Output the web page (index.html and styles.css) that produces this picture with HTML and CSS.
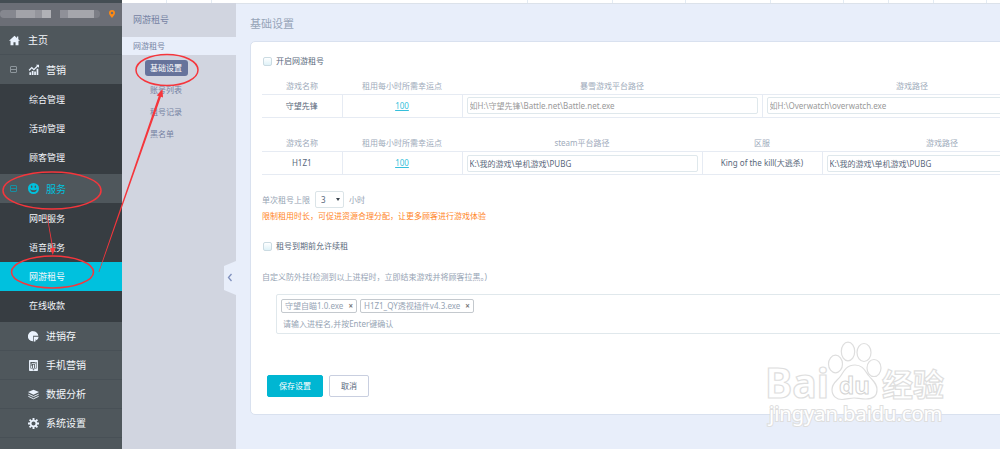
FILE: index.html
```html
<!DOCTYPE html>
<html lang="zh-CN">
<head>
<meta charset="utf-8">
<title>网游租号 - 基础设置</title>
<link rel="stylesheet" href="styles.css">
</head>
<body>
<div class="app">
  <nav class="sidebar">
    <div class="user">
      <span class="mask mask-a"></span><span class="mask mask-b"></span>
      <svg class="pin" viewBox="0 0 12 16"><path fill="#ff8a14" fill-rule="evenodd" d="M6 0a6 6 0 0 1 6 6c0 3.500-3.500 7-6 10-2.500-3-6-6.500-6-10a6 6 0 0 1 6-6zm0 3.500a2.500 2.500 0 1 0 0 5 2.500 2.500 0 0 0 0-5z"/></svg>
    </div>
    <a class="item home" href="#"><svg class="icon" viewBox="0 0 16 16"><path fill="#eaf2fd" d="M8 1 0 8.500h2.200V15H6.500v-4.500h3V15h4.300V8.500H16l-2.500-2.400V2h-2v2.200z"/></svg>主页</a>
    <a class="item" href="#"><span class="fold"></span><svg class="icon" viewBox="0 0 16 16"><path fill="#eaf2fd" d="M2 12h2.500v4H2zM5.500 10H8v6H5.500zM9 11h2.500v5H9zM12.500 7H15v9h-2.500zM1 8.500 5.500 4l3 3L13 2.500 11.500 1H16v4.500L14.200 4 8.500 9.500l-3-3L2 10z"/></svg>营销</a>
    <div class="sub">
      <a href="#">综合管理</a>
      <a href="#">活动管理</a>
      <a href="#">顾客管理</a>
    </div>
    <a class="item current" href="#"><span class="fold"></span><svg class="icon" viewBox="0 0 16 16"><circle cx="8" cy="8" r="8" fill="#00c1de"/><ellipse cx="5.300" cy="5.300" rx="1.100" ry="1.700" fill="#4b5358"/><ellipse cx="10.700" cy="5.300" rx="1.100" ry="1.700" fill="#4b5358"/><path d="M3 9c2.500 2 7.500 2 10 0-1 5.500-9 5.500-10 0z" fill="#4b5358"/></svg>服务</a>
    <div class="sub">
      <a href="#">网吧服务</a>
      <a href="#">语音服务</a>
      <a class="on" href="#">网游租号</a>
      <a href="#">在线收款</a>
    </div>
    <a class="item line" href="#"><svg class="icon" viewBox="0 0 16 16"><path fill="#eaf2fd" d="M7.200.5A7.200 7.200 0 0 1 15 7H7v8A7.200 7.200 0 0 1 7.200.500z"/><path fill="#eaf2fd" d="M7.500.5a7.300 7.300 0 0 0 0 14.500zM8.500 8.500h7a7 7 0 0 1-3 5l-1.500-1.500v3l-2.500.8z"/></svg>进销存</a>
    <a class="item line" href="#"><svg class="icon" viewBox="0 0 16 16"><path fill="#eaf2fd" fill-rule="evenodd" d="M2.500 0h11a1 1 0 0 1 1 1v14a1 1 0 0 1-1 1h-11a1 1 0 0 1-1-1V1a1 1 0 0 1 1-1zM3.500 3v9.500h9V3zM7 13.500v1.300h2v-1.300z"/><path fill="#eaf2fd" d="M4.500 8H6v3.500H4.500zM7.200 7h1.600v4.500H7.200zM10 5h1.500v6.500H10zM4 6l3-2 1.500 1L11 3v1.500L8.500 6.200 7 5.300 4 7z"/></svg>手机营销</a>
    <a class="item line" href="#"><svg class="icon" viewBox="0 0 16 16"><path fill="#eaf2fd" d="m8 1 8 3.500L8 8.500 0 4.500z"/><path fill="none" stroke="#eaf2fd" stroke-width="1.400" d="m.5 7.500 7.500 3.500 7.500-3.500M.5 10.700 8 14.200l7.500-3.500"/></svg>数据分析</a>
    <a class="item line" href="#"><svg class="icon" viewBox="0 0 16 16"><circle cx="8" cy="8" r="4.300" fill="none" stroke="#eaf2fd" stroke-width="2.600"/><path stroke="#eaf2fd" stroke-width="2.800" d="M8 0v3M8 13v3M0 8h3M13 8h3M2.300 2.300l2.200 2.200M11.500 11.500l2.200 2.200M13.700 2.300l-2.200 2.200M4.500 11.500l-2.200 2.200"/></svg>系统设置</a>
  </nav>

  <div class="body">
    <div class="tabs">
      <span class="t45"></span><span class="t45"></span><span class="t316"></span><span class="t85"></span><span class="t73"></span><span class="t85"></span><span class="t73"></span><span class="t45"></span><span class="t45"></span><span class="t53"></span>
    </div>
    <div class="columns">
      <aside class="second">
        <h2>网游租号</h2>
        <div class="group">网游租号</div>
        <div class="links">
          <a class="on" href="#">基础设置</a>
          <a href="#">账号列表</a>
          <a href="#">租号记录</a>
          <a href="#">黑名单</a>
        </div>
        <button class="collapse" type="button" aria-label="收起"><svg viewBox="0 0 12 34"><path fill="#e8eefa" d="M12 0v34L0 29V5z"/><path fill="none" stroke="#7f90bd" stroke-width="1.300" d="M7.500 13 4.500 16.500l3 3.500"/></svg></button>
      </aside>

      <main class="main">
        <h1>基础设置</h1>
        <form class="panel">
          <label class="check"><input type="checkbox">开启网游租号</label>

          <table class="grid">
            <colgroup><col class="c80"><col class="c120"><col class="c300"><col class="c300"></colgroup>
            <thead><tr><th>游戏名称</th><th>租用每小时所需幸运点</th><th>暴雪游戏平台路径</th><th>游戏路径</th></tr></thead>
            <tbody><tr>
              <td>守望先锋</td>
              <td><a href="#">100</a></td>
              <td><input class="path" type="text" aria-label="暴雪游戏平台路径" placeholder="如H:\守望先锋\Battle.net\Battle.net.exe"></td>
              <td><input class="path" type="text" aria-label="游戏路径" placeholder="如H:\Overwatch\overwatch.exe"></td>
            </tr></tbody>
          </table>

          <table class="grid">
            <colgroup><col class="c80"><col class="c120"><col class="c240"><col class="c120"><col class="c240"></colgroup>
            <thead><tr><th>游戏名称</th><th>租用每小时所需幸运点</th><th>steam平台路径</th><th>区服</th><th>游戏路径</th></tr></thead>
            <tbody><tr>
              <td>H1Z1</td>
              <td><a href="#">100</a></td>
              <td><input class="path" type="text" aria-label="steam平台路径" value="K:\我的游戏\单机游戏\PUBG"></td>
              <td>King of the kill(大逃杀)</td>
              <td><input class="path" type="text" aria-label="游戏路径" value="K:\我的游戏\单机游戏\PUBG"></td>
            </tr></tbody>
          </table>

          <div class="limit">
            <label for="hours">单次租号上限</label>
            <span class="pick"><select id="hours"><option>3</option></select></span>
            <span>小时</span>
          </div>
          <p class="hint">限制租用时长，可促进资源合理分配，让更多顾客进行游戏体验</p>

          <label class="check renew"><input type="checkbox">租号到期前允许续租</label>

          <label class="caption" for="process">自定义防外挂(检测到以上进程时，立即结束游戏并将顾客拉黑。)</label>
          <div class="tagbox">
            <div class="tags">
              <span class="tag">守望自瞄1.0.exe<button type="button" aria-label="删除">×</button></span>
              <span class="tag">H1Z1_QY透视插件v4.3.exe<button type="button" aria-label="删除">×</button></span>
            </div>
            <input id="process" type="text" placeholder="请输入进程名,并按Enter键确认">
          </div>

          <div class="actions">
            <button class="save" type="button">保存设置</button>
            <button class="cancel" type="button">取消</button>
          </div>
        </form>
      </main>
    </div>
  </div>

  <svg class="marks" width="240" height="320" viewBox="0 0 240 320">
    <g fill="none" stroke="#f5363c" stroke-width="1.500">
      <ellipse cx="167" cy="70" rx="31" ry="15.500"/>
      <ellipse cx="52" cy="190.500" rx="49" ry="18.500"/>
      <ellipse cx="52.500" cy="272" rx="41" ry="16"/>
    </g>
    <path fill="#f5363c" d="M46.800 216 52.200 248l-2.200.4L52.800 255l2.600-7.300-2.200.2L47.400 216zM98.500 272 158.700 96l-2-.6L162.500 89l.5 8.500-2-.7L99.200 272z"/>
  </svg>

  <svg class="watermark" width="190" height="90" viewBox="0 0 190 90">
    <g fill="#fff" fill-opacity=".9" stroke="#dedede" stroke-width="1.200">
      <text class="wm-logo" x="5" y="60">Bai</text>
      <ellipse cx="75.500" cy="26" rx="7" ry="8.800"/>
      <ellipse cx="88" cy="13.500" rx="6.700" ry="9.300"/>
      <ellipse cx="104" cy="14.500" rx="7" ry="9"/>
      <ellipse cx="114" cy="30" rx="7" ry="8.500"/>
      <path d="M95 27c8 0 10 6 14 11s8 7 8 14-5 9-11 9-8-1-12-1-7 1.500-12 1.500-10-3-10-10 6-9 9-14 6-10.500 14-10.500z"/>
      <text class="wm-cjk" x="122" y="58">经验</text>
    </g>
    <text class="wm-du" x="79" y="56">du</text>
    <text class="wm-url" x="9" y="83">jingyan.baidu.com</text>
  </svg>
</div>
</body>
</html>
```
FILE: styles.css
```css
* { box-sizing: border-box; }

body {
  margin: 0;
  overflow: hidden;
  background: #e8eefa;
  color: #59687b;
  font: 8px/12px "Noto Sans", "Noto Sans CJK SC", sans-serif;
}

a { color: inherit; text-decoration: none; }
h1, h2, p { margin: 0; font-weight: 400; }
button, input, select { font: inherit; color: inherit; margin: 0; }

.app { position: relative; display: flex; min-height: 100vh; overflow: hidden; }

/* Primary navigation */
.sidebar {
  flex: none;
  width: 122px;
  background: #4f575c;
  border-top: 3px solid #444d53;
  color: #f3f6fa;
}
.user {
  display: flex;
  align-items: center;
  gap: 9px;
  height: 23px;
  padding-bottom: 1px;
  background: #6b6e76;
}
.mask { height: 8px; border-radius: 4px 0 0 4px; background: linear-gradient(90deg, #85878f 0 16px, #a2a3a9 16px 35px, #94959c 35px 42px, #b0b1b6 42px); }
.mask-a { width: 51px; }
.mask-b { width: 40px; border-radius: 0 4px 4px 0; background: linear-gradient(90deg, #8f9098 0 8px, #a5a6ac 8px 34px, #7c7e86 34px); }
.pin { width: 6px; height: 8px; }

.item {
  position: relative;
  display: flex;
  align-items: center;
  gap: 7px;
  height: 29px;
  padding-left: 28px;
  font-size: 10px;
}
.item .icon { width: 11px; height: 11px; }
.home { padding-left: 9px; gap: 8px; border-bottom: 1px solid #485056; }
.line { border-bottom: 1px solid #485056; }
.current { color: #00c1de; }
.fold {
  position: absolute;
  left: 10px;
  top: 11px;
  width: 7px;
  height: 7px;
  border: 1px solid #8d969c;
  border-radius: 1px;
  background: linear-gradient(#8d969c, #8d969c) center / 5px 1px no-repeat;
}
.current .fold { border-color: #178fa2; background-image: linear-gradient(#178fa2, #178fa2); }
.sub { padding: 1px 0 2px; background: #373d42; font-size: 9px; }
.sub a { display: block; padding-left: 29px; line-height: 29px; }
.sub .on { background: #00c1de; }

/* Work area */
.body { flex: 1; min-width: 0; display: flex; flex-direction: column; }
.tabs { display: flex; height: 3px; background: #fff; box-shadow: 0 1px 0 #dce2ea; overflow: hidden; }
.tabs span { flex: none; border-right: 1px solid #e3ebf3; }
.t45 { width: 45px; }
.t53 { width: 53px; }
.t73 { width: 73px; }
.t85 { width: 85px; }
.t316 { width: 316px; }
.columns { flex: 1; display: flex; min-height: 0; }

.second {
  position: relative;
  flex: none;
  width: 114px;
  background: #d1d5e0;
  color: #7582a3;
}
.second h2 { padding-left: 11px; font-size: 9px; line-height: 34px; }
.group { padding-left: 11px; background: #e8eefa; line-height: 18px; }
.links { display: flex; flex-direction: column; align-items: flex-start; gap: 6px; padding: 5px 0 0 23px; }
.links a { padding: 0 5px; line-height: 16px; }
.links .on { padding: 0 6px 0 5px; border-radius: 3px; background: #66739b; color: #fff; }
.collapse {
  position: absolute;
  right: 0;
  top: 258px;
  width: 12px;
  height: 34px;
  padding: 0;
  border: 0;
  background: none;
}
.collapse svg { display: block; width: 12px; height: 34px; }

.main { flex: 1; min-width: 0; padding-left: 14px; overflow: hidden; }
.main h1 { padding-top: 4px; color: #96a4b8; font-size: 11px; line-height: 34px; }

.panel {
  min-width: 826px;
  padding: 13px 12px 17px 11px;
  border: 1px solid #d9e1ef;
  border-radius: 5px;
  background: #fff;
}
.check { display: flex; align-items: center; gap: 4px; height: 12px; padding-left: 1px; }
.check input {
  appearance: none;
  width: 9px;
  height: 9px;
  border: 1px solid #cbdbe2;
  border-radius: 2px;
  background: linear-gradient(#fff, #dff2f8);
}

.grid { width: 800px; margin-top: 11px; border-collapse: collapse; table-layout: fixed; }
.grid + .grid { margin-top: 18px; }
.c80 { width: 80px; }
.c120 { width: 120px; }
.c240 { width: 240px; }
.c300 { width: 300px; }
.grid th { height: 16px; padding: 0; color: #a0abbb; font-weight: 400; }
.grid td {
  height: 23px;
  padding: 0 4px;
  border: 1px solid #e6ebf3;
  text-align: center;
}
.grid td:first-child { border-left: 0; }
.grid td:last-child { border-right: 0; }
.grid a { color: #35bfdb; text-decoration: underline; }
.path {
  display: block;
  width: 100%;
  height: 17px;
  padding: 0 2px;
  border: 1px solid #dfe8ec;
  border-radius: 2px;
  background: #fff;
}
::placeholder { color: #999; opacity: 1; }

.limit { display: flex; align-items: center; gap: 5px; margin-top: 16px; color: #96a4b4; }
.pick { position: relative; display: block; }
.pick select {
  appearance: none;
  display: block;
  width: 29px;
  height: 17px;
  padding: 0 5px;
  border: 1px solid #dbe4e8;
  border-radius: 2px;
  background: #fff;
  color: #59687b;
}
.pick::after {
  content: "";
  position: absolute;
  right: 4px;
  top: 7px;
  border: 2px solid transparent;
  border-top: 3px solid #3d4650;
  border-bottom: 0;
}
.hint { margin-top: 2px; color: #ff8528; }
.renew { margin-top: 18px; }
.caption { display: block; margin-top: 19px; color: #96a4b4; }

.tagbox {
  margin: 11px 0 0 14px;
  padding: 4px 4px 3px;
  border: 1px solid #e0e8ec;
  border-radius: 2px;
  color: #96a4b4;
}
.tags { display: flex; gap: 3px; }
.tag {
  display: flex;
  align-items: center;
  gap: 5px;
  height: 14px;
  padding: 0 3px;
  border: 1px solid #c4c9ce;
  border-radius: 2px;
}
.tag button { padding: 0; border: 0; background: none; color: #777; font-weight: 700; line-height: 12px; }
.tagbox input {
  display: block;
  width: 100%;
  height: 12px;
  margin-top: 5px;
  padding: 0 2px;
  border: 0;
  background: none;
}
.tagbox ::placeholder { color: #96a4b4; }

.actions { display: flex; gap: 6px; margin: 41px 0 0 5px; }
.actions button { height: 22px; padding: 0 11px; border: 1px solid #c9cfe0; border-radius: 2px; background: #fff; }
.actions .save { border-color: #00b6d2; background: #00b6d2; color: #fff; }

/* Overlays */
.marks { position: absolute; left: 0; top: 0; pointer-events: none; }
.watermark { position: absolute; right: 50px; bottom: 21px; pointer-events: none; }
.wm-logo { font: 700 41px "Noto Sans", sans-serif; }
.wm-cjk { font: 700 31px "Noto Sans CJK SC", sans-serif; }
.wm-url { font: 400 20px "Noto Sans", sans-serif; fill: #fff; stroke: #dedede; stroke-width: 2px; paint-order: stroke; }
.wm-du { font: 700 24px "Noto Sans", sans-serif; fill: #fff; stroke: #d4d4d4; stroke-width: 1px; }
```
